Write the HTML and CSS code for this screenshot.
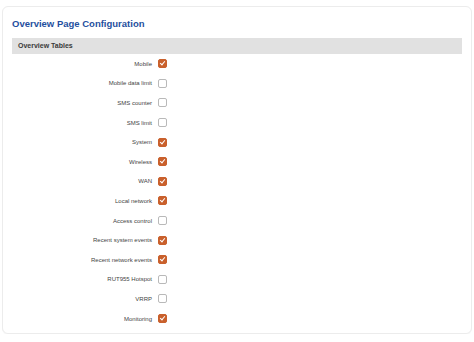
FILE: index.html
```html
<!DOCTYPE html>
<html>
<head>
  <title>Overview Page Configuration</title>
  <link rel="stylesheet" href="styles.css">
</head>
<body>
  <div class="card">
    <h1>Overview Page Configuration</h1>
    <div class="section-title">Overview Tables</div>
    <div class="rows">
      <div class="row"><label>Mobile</label><span class="box checked"></span></div>
      <div class="row"><label>Mobile data limit</label><span class="box"></span></div>
      <div class="row"><label>SMS counter</label><span class="box"></span></div>
      <div class="row"><label>SMS limit</label><span class="box"></span></div>
      <div class="row"><label>System</label><span class="box checked"></span></div>
      <div class="row"><label>Wireless</label><span class="box checked"></span></div>
      <div class="row"><label>WAN</label><span class="box checked"></span></div>
      <div class="row"><label>Local network</label><span class="box checked"></span></div>
      <div class="row"><label>Access control</label><span class="box"></span></div>
      <div class="row"><label>Recent system events</label><span class="box checked"></span></div>
      <div class="row"><label>Recent network events</label><span class="box checked"></span></div>
      <div class="row"><label>RUT955 Hotspot</label><span class="box"></span></div>
      <div class="row"><label>VRRP</label><span class="box"></span></div>
      <div class="row"><label>Monitoring</label><span class="box checked"></span></div>
    </div>
  </div>
</body>
</html>
```
FILE: styles.css
```css
body {
  margin: 0;
  padding: 6px 2px 0;
  background-color: #fff;
  font-family: "Liberation Sans", Arial, sans-serif;
}
.card {
  background-color: white;
  border: 1px solid #ececec;
  border-radius: 6px;
  padding: 8px 9px 0;
  height: 318px;
  box-shadow: 0 1px 1px rgba(0,0,0,0.03);
}
h1 {
  color: #1f4f9e;
  font-size: 9.5px;
  font-weight: bold;
  margin: 2px 0 8px;
  line-height: 13px;
}
.section-title {
  background-color: #e1e1e1;
  color: #3a3a3a;
  font-size: 7px;
  font-weight: bold;
  padding: 0 6px;
  height: 16px;
  line-height: 16px;
}
.row {
  display: flex;
  align-items: center;
  height: 19.6px;
}
.row label {
  width: 140px;
  text-align: right;
  font-size: 6px;
  color: #444;
  padding-right: 6px;
}
.box {
  width: 7px;
  height: 7px;
  border: 1px solid #b9b9b9;
  border-radius: 2px;
  background-color: #fff;
  position: relative;
}
.box.checked {
  background-color: #c9602c;
  border-color: #c9602c;
}
.box.checked::after {
  content: "";
  position: absolute;
  left: 2px;
  top: 0px;
  width: 2px;
  height: 4px;
  border: solid #fff;
  border-width: 0 1.3px 1.3px 0;
  transform: rotate(40deg);
}
```
